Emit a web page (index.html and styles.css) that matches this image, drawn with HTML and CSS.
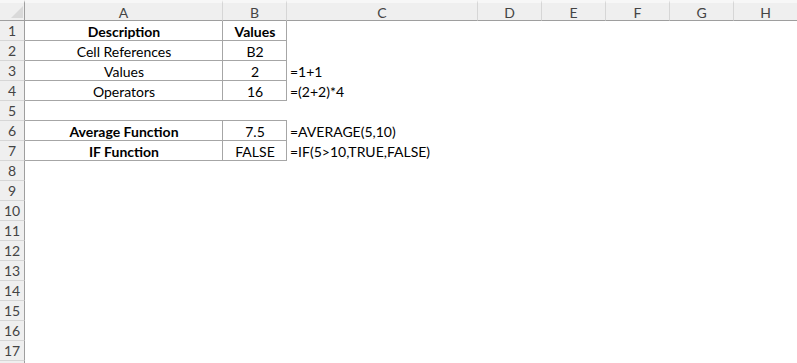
FILE: index.html
```html
<!DOCTYPE html>
<html>
<head>
<meta charset="utf-8">
<link rel="stylesheet" href="styles.css">
</head>
<body>
<div class="sheet">
  <div class="corner"><span class="tri"></span></div>
  <div class="ch">A</div><div class="ch">B</div><div class="ch">C</div><div class="ch">D</div><div class="ch">E</div><div class="ch">F</div><div class="ch">G</div><div class="ch">H</div>

  <div class="rh">1</div><div class="c ctr b bx">Description</div><div class="c ctr b bx">Values</div><div class="c"></div><div class="c"></div><div class="c"></div><div class="c"></div><div class="c"></div><div class="c"></div>
  <div class="rh">2</div><div class="c ctr bx">Cell References</div><div class="c ctr bx">B2</div><div class="c"></div><div class="c"></div><div class="c"></div><div class="c"></div><div class="c"></div><div class="c"></div>
  <div class="rh">3</div><div class="c ctr bx">Values</div><div class="c ctr bx">2</div><div class="c">=1+1</div><div class="c"></div><div class="c"></div><div class="c"></div><div class="c"></div><div class="c"></div>
  <div class="rh">4</div><div class="c ctr bx">Operators</div><div class="c ctr bx">16</div><div class="c">=(2+2)*4</div><div class="c"></div><div class="c"></div><div class="c"></div><div class="c"></div><div class="c"></div>
  <div class="rh">5</div><div class="c bb"></div><div class="c bb"></div><div class="c"></div><div class="c"></div><div class="c"></div><div class="c"></div><div class="c"></div><div class="c"></div>
  <div class="rh">6</div><div class="c ctr b bx">Average Function</div><div class="c ctr bx">7.5</div><div class="c">=AVERAGE(5,10)</div><div class="c"></div><div class="c"></div><div class="c"></div><div class="c"></div><div class="c"></div>
  <div class="rh">7</div><div class="c ctr b bx">IF Function</div><div class="c ctr bx">FALSE</div><div class="c">=IF(5&gt;10,TRUE,FALSE)</div><div class="c"></div><div class="c"></div><div class="c"></div><div class="c"></div><div class="c"></div>
  <div class="rh">8</div><div class="c"></div><div class="c"></div><div class="c"></div><div class="c"></div><div class="c"></div><div class="c"></div><div class="c"></div><div class="c"></div>
  <div class="rh">9</div><div class="c"></div><div class="c"></div><div class="c"></div><div class="c"></div><div class="c"></div><div class="c"></div><div class="c"></div><div class="c"></div>
  <div class="rh">10</div><div class="c"></div><div class="c"></div><div class="c"></div><div class="c"></div><div class="c"></div><div class="c"></div><div class="c"></div><div class="c"></div>
  <div class="rh">11</div><div class="c"></div><div class="c"></div><div class="c"></div><div class="c"></div><div class="c"></div><div class="c"></div><div class="c"></div><div class="c"></div>
  <div class="rh">12</div><div class="c"></div><div class="c"></div><div class="c"></div><div class="c"></div><div class="c"></div><div class="c"></div><div class="c"></div><div class="c"></div>
  <div class="rh">13</div><div class="c"></div><div class="c"></div><div class="c"></div><div class="c"></div><div class="c"></div><div class="c"></div><div class="c"></div><div class="c"></div>
  <div class="rh">14</div><div class="c"></div><div class="c"></div><div class="c"></div><div class="c"></div><div class="c"></div><div class="c"></div><div class="c"></div><div class="c"></div>
  <div class="rh">15</div><div class="c"></div><div class="c"></div><div class="c"></div><div class="c"></div><div class="c"></div><div class="c"></div><div class="c"></div><div class="c"></div>
  <div class="rh">16</div><div class="c"></div><div class="c"></div><div class="c"></div><div class="c"></div><div class="c"></div><div class="c"></div><div class="c"></div><div class="c"></div>
  <div class="rh">17</div><div class="c"></div><div class="c"></div><div class="c"></div><div class="c"></div><div class="c"></div><div class="c"></div><div class="c"></div><div class="c"></div>
  <div class="rh"></div><div class="c"></div><div class="c"></div><div class="c"></div><div class="c"></div><div class="c"></div><div class="c"></div><div class="c"></div><div class="c"></div>
</div>
</body>
</html>
```
FILE: styles.css
```css
html, body {
  margin: 0;
  padding: 0;
  background: #ffffff;
  overflow: hidden;
}
body {
  width: 797px;
  height: 363px;
  font-family: Lato, "Liberation Sans", sans-serif;
  font-size: 14px;
  color: #000;
}
.sheet {
  display: grid;
  grid-template-columns: 25px 198px 64px 191px 64px 64px 64px 64px 64px;
  grid-template-rows: 21px;
  grid-auto-rows: 20px;
  width: 798px;
}
.sheet > div {
  box-sizing: border-box;
  display: flex;
  align-items: center;
  white-space: nowrap;
  overflow: visible;
}
.corner {
  position: relative;
  background: #efefef;
  border-top: 3px solid #f7f7f7;
  border-right: 1px solid #9e9e9e;
  border-bottom: 1px solid #9e9e9e;
}
.tri {
  position: absolute;
  right: 1px;
  bottom: 2px;
  width: 0;
  height: 0;
  border-left: 12px solid transparent;
  border-bottom: 12px solid #d9d9d9;
}
.ch {
  background: #efefef;
  border-top: 3px solid #f7f7f7;
  border-right: 1px solid #d6d6d6;
  border-bottom: 1px solid #9e9e9e;
  justify-content: center;
  color: #444;
  font-size: 14px;
  padding-top: 1px;
}
.rh {
  background: #efefef;
  border-right: 1px solid #9e9e9e;
  border-bottom: 1px solid #d6d6d6;
  justify-content: center;
  color: #444;
  font-size: 14px;
}
.c {
  padding: 1px 2px 0 3px;
}
.ctr {
  justify-content: center;
}
.b {
  font-weight: bold;
}
.bx {
  border-right: 1px solid #a6a6a6;
  border-bottom: 1px solid #a6a6a6;
}
.bb {
  border-bottom: 1px solid #a6a6a6;
}
```
